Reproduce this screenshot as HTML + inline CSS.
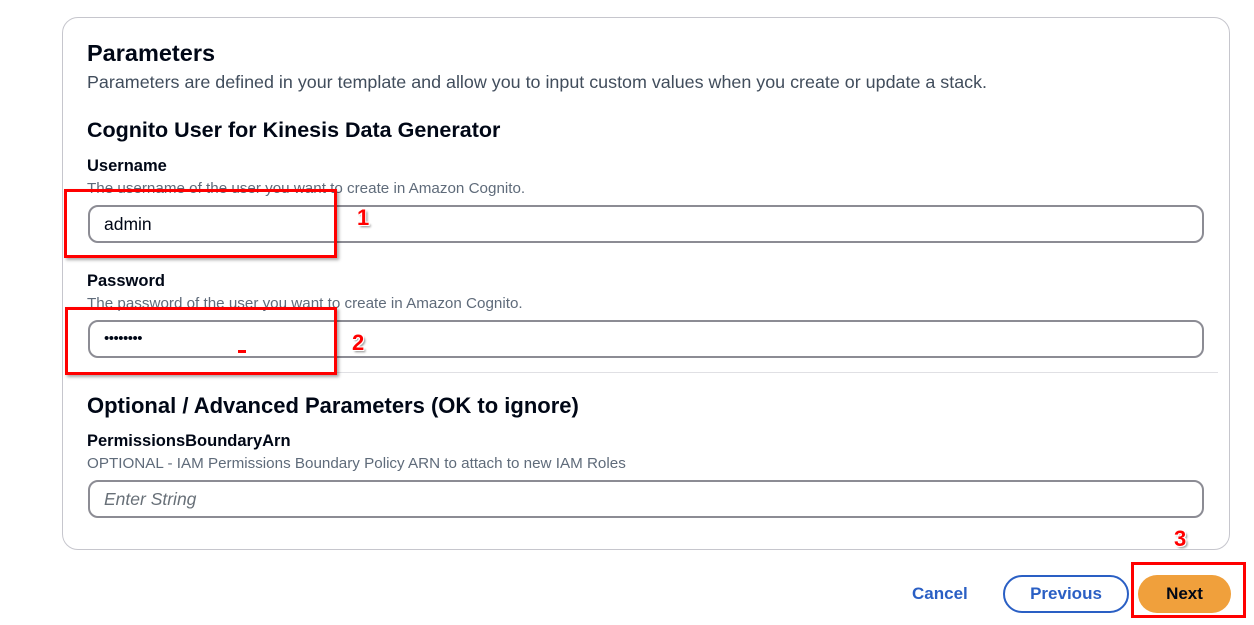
<!DOCTYPE html>
<html><head><style>
body{margin:0;width:1254px;height:625px;background:#fff;font-family:"Liberation Sans",sans-serif;color:#000716;position:relative;overflow:hidden}
.card{position:absolute;left:62px;top:17px;width:1168px;height:533px;border:1px solid #c6c6cd;border-radius:16px;box-sizing:border-box}
.a{position:absolute;white-space:nowrap}
.h1{font-size:23.5px;font-weight:bold}
.h2{font-size:21.5px;font-weight:bold}
.lab{font-size:16.5px;font-weight:bold}
.desc{font-size:15.2px;color:#5f6b7a}
.inp{position:absolute;left:88px;width:1116px;height:38px;border:2px solid #8c8c94;border-radius:10px;box-sizing:border-box;font-size:17.5px;padding-left:14px;line-height:34px}
.red{position:absolute;border:3px solid #f00;box-sizing:border-box;box-shadow:2px 2px 3px rgba(0,0,0,.35)}
.num{position:absolute;color:#f00;font-weight:bold;font-size:22px;text-shadow:1px 1px 0 #fff,-1px -1px 0 #fff,1px -1px 0 #fff,-1px 1px 0 #fff,2px 2px 2px #888}
.btn{position:absolute;top:575px;height:38px;border-radius:19px;box-sizing:border-box;font-weight:bold;font-size:17px;text-align:center;line-height:34px}
</style></head><body>
<div class="card"></div>
<div class="a h1" style="left:87px;top:40px">Parameters</div>
<div class="a" style="left:87px;top:72px;font-size:17.9px;color:#414d5c">Parameters are defined in your template and allow you to input custom values when you create or update a stack.</div>
<div class="a h2" style="left:87px;top:118px">Cognito User for Kinesis Data Generator</div>
<div class="a lab" style="left:87px;top:157px">Username</div>
<div class="a desc" style="left:87px;top:180px">The username of the user you want to create in Amazon Cognito.</div>
<div class="inp" style="top:205px">admin</div>
<div class="a lab" style="left:87px;top:272px">Password</div>
<div class="a desc" style="left:87px;top:295px">The password of the user you want to create in Amazon Cognito.</div>
<div class="inp" style="top:320px;font-size:15px;letter-spacing:-0.5px">••••••••</div>
<div style="position:absolute;left:238px;top:350px;width:8px;height:3px;background:#f00"></div>
<div style="position:absolute;left:88px;top:372px;width:1130px;height:1px;background:#e0e0e4"></div>
<div class="a h2" style="left:87px;top:393px;font-size:22px">Optional / Advanced Parameters (OK to ignore)</div>
<div class="a lab" style="left:87px;top:432px">PermissionsBoundaryArn</div>
<div class="a desc" style="left:87px;top:455px">OPTIONAL - IAM Permissions Boundary Policy ARN to attach to new IAM Roles</div>
<div class="inp" style="top:480px;font-style:italic;color:#687078">Enter String</div>
<div class="red" style="left:64px;top:189px;width:273px;height:69px"></div>
<div class="red" style="left:65px;top:307px;width:272px;height:68px"></div>
<div class="num" style="left:357px;top:205px">1</div>
<div class="num" style="left:352px;top:330px">2</div>
<div class="num" style="left:1174px;top:526px">3</div>
<div class="a" style="left:912px;top:584px;font-weight:bold;font-size:17px;color:#2a5fc4">Cancel</div>
<div class="btn" style="left:1003px;width:126px;border:2px solid #2a5fc4;color:#2a5fc4">Previous</div>
<div class="btn" style="left:1138px;width:93px;background:#f0a03c;color:#000716;line-height:38px">Next</div>
<div class="red" style="left:1131px;top:562px;width:115px;height:56px;box-shadow:none"></div>
</body></html>
